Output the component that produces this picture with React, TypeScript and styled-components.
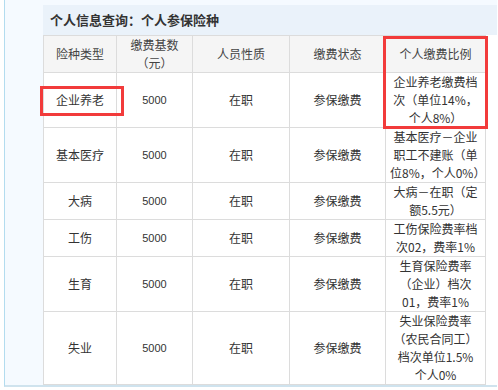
import React from 'react'
import styled, { createGlobalStyle } from 'styled-components'

const GlobalStyle = createGlobalStyle`
  body {
    margin: 0;
    background: #ffffff;
    font-family: 'Liberation Sans', 'Noto Sans CJK SC', sans-serif;
  }
`

const Panel = styled.div`
  margin-left: 4px;
  width: 493px;
  padding: 5px 0 0 38px;
  box-sizing: border-box;
  background-color: #f5faff;
  border-left: 1px solid #b3dcef;
  border-bottom: 2px solid #cfe3ee;
`

const Content = styled.div`
  position: relative;
  background-color: #ffffff;
`

const Title = styled.div`
  height: 30px;
  line-height: 30px;
  padding-left: 7px;
  background-color: #eaf2fa;
  color: #333;
  font-size: 13px;
  font-weight: bold;
  font-family: 'Noto Sans CJK SC', sans-serif;
`

const Table = styled.table`
  width: 442px;
  table-layout: fixed;
  border-collapse: collapse;
  font-size: 12px;
  color: #333;
`

const HeadCell = styled.th`
  border: 1px solid #dcdcdc;
  background-color: #f5f5f5;
  font-weight: normal;
  color: #444;
  line-height: 18px;
  padding: 0;
  text-align: center;
  font-family: 'Noto Sans CJK SC', sans-serif;
`

const Cell = styled.td`
  border: 1px solid #dcdcdc;
  line-height: 18px;
  padding: 0 4px;
  text-align: center;
  vertical-align: middle;
  font-family: 'Noto Sans CJK SC', sans-serif;
`

const Num = styled(Cell)`
  font-family: 'Liberation Sans', sans-serif;
  font-size: 11px;
`

const Mark = styled.div<{ $l: number; $t: number; $w: number; $h: number }>`
  position: absolute;
  left: ${(p) => p.$l}px;
  top: ${(p) => p.$t}px;
  width: ${(p) => p.$w}px;
  height: ${(p) => p.$h}px;
  box-sizing: border-box;
  border: 3px solid #f23b3b;
  pointer-events: none;
`

const rows = [
  { type: '企业养老', ratio: ['企业养老缴费档', '次（单位14%，', '个人8%）'] },
  { type: '基本医疗', ratio: ['基本医疗－企业', '职工不建账（单', '位8%，个人0%）'] },
  { type: '大病', ratio: ['大病－在职（定', '额5.5元）'] },
  { type: '工伤', ratio: ['工伤保险费率档', '次02，费率1%'] },
  { type: '生育', ratio: ['生育保险费率', '（企业）档次', '01，费率1%'] },
  { type: '失业', ratio: ['失业保险费率', '（农民合同工）', '档次单位1.5%', '个人0%'] },
]

const App = () => {
  return (
    <>
      <GlobalStyle />
      <Panel>
        <Content>
          <Title>个人信息查询：个人参保险种</Title>
          <Table>
            <colgroup>
              <col style={{ width: 73 }} />
              <col style={{ width: 76 }} />
              <col style={{ width: 97 }} />
              <col style={{ width: 96 }} />
              <col style={{ width: 100 }} />
            </colgroup>
            <thead>
              <tr>
                <HeadCell>险种类型</HeadCell>
                <HeadCell>
                  缴费基数
                  <br />
                  （元）
                </HeadCell>
                <HeadCell>人员性质</HeadCell>
                <HeadCell>缴费状态</HeadCell>
                <HeadCell>个人缴费比例</HeadCell>
              </tr>
            </thead>
            <tbody>
              {rows.map((r) => (
                <tr key={r.type}>
                  <Cell>{r.type}</Cell>
                  <Num>5000</Num>
                  <Cell>在职</Cell>
                  <Cell>参保缴费</Cell>
                  <Cell>
                    {r.ratio.map((line, i) => (
                      <div key={i}>{line}</div>
                    ))}
                  </Cell>
                </tr>
              ))}
            </tbody>
          </Table>
          <Mark $l={-3} $t={81} $w={84} $h={30} />
          <Mark $l={340} $t={31} $w={105} $h={93} />
        </Content>
      </Panel>
    </>
  )
}

export default App
